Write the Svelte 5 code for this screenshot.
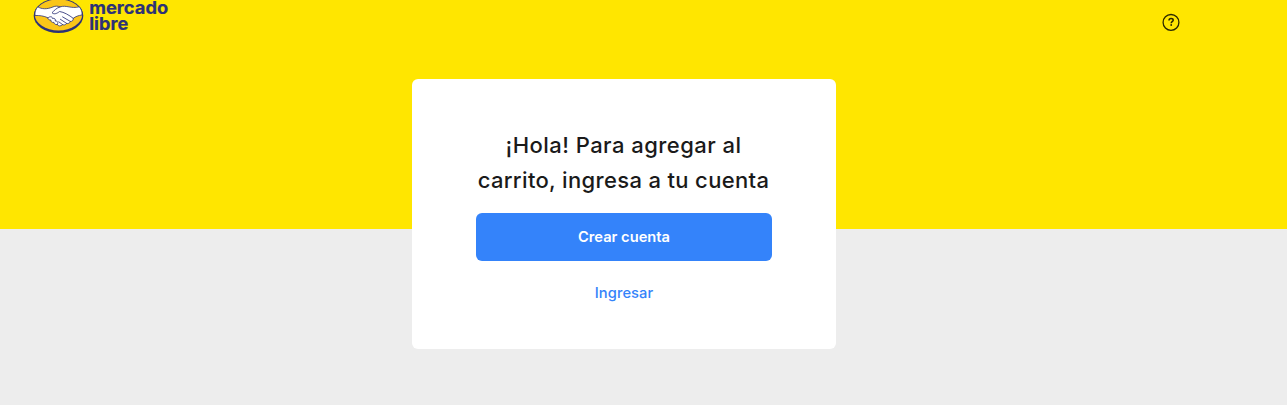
<script>
  const title = ['¡Hola! Para agregar al', 'carrito, ingresa a tu cuenta'];
</script>

<div class="page">
  <header class="nav">
    <svg class="logo" width="140" height="36" viewBox="30 0 140 36" role="img" aria-label="mercado libre">
      <ellipse cx="58.5" cy="15.7" rx="24.8" ry="17.3" fill="#2d3277" />
      <ellipse cx="58.5" cy="14.9" rx="23.6" ry="15.5" fill="#fac619" />
      <path d="M37.8 6.8C41.5 9.2 47 9.5 53 6.9C55.5 5.9 57.7 5.9 60 6.9C66.5 4.8 71 9 79.3 6.8C81.6 9.5 82.3 12.3 82 15C78.5 15.4 75.8 16.5 73.2 18.3C73.5 20.5 72 21.6 70.3 21.4C69.7 23.2 68.1 23.9 66.6 23.4C65.5 25 64 25.2 62.6 24.6C60.8 26.6 58.3 26.1 57.3 24.6C55.2 24.8 54 23.6 54 22.4C51.7 22.7 50.5 21.4 51 20.1C48.9 20.2 47.8 19 48 17.8C44 15.9 39.2 15.3 35 15.5C34.7 12.3 35.6 9.2 37.8 6.8Z" fill="#fff" stroke="#2d3277" stroke-width=".8" />
      <path d="M60 6.9C56 8 54.2 10.9 52 12.7C54.2 15 57.4 13.2 59.6 11.5C63.9 12.1 69 15 73.2 18.3M62.6 16.9L70.3 21.4M60.4 19.3L66.6 23.4M58.8 21.8L62.6 24.6M48 17.8C50.4 15.8 52.5 16.8 52.4 18.4C54.6 17.9 56 19.4 55.2 21C57.3 20.8 58.7 22.2 57.3 24.6" fill="none" stroke="#2d3277" stroke-width=".85" stroke-linecap="round" />
      <g class="wordmark">
        <text x="89.2" y="13.6" textLength="79" lengthAdjust="spacingAndGlyphs">mercado</text>
        <text x="89.2" y="29.9" textLength="39" lengthAdjust="spacingAndGlyphs">libre</text>
      </g>
    </svg>
    <svg class="help" width="18" height="18" viewBox="0 0 18 18" aria-label="Ayuda">
      <circle cx="9" cy="9.4" r="7.9" fill="none" stroke="#2b2900" stroke-width="1.3" />
      <path d="M7 7.6C7 6.3 7.8 5.6 9.1 5.6C10.4 5.6 11.2 6.3 11.2 7.2C11.2 8.4 9.2 8.5 9.2 10.3" fill="none" stroke="#2b2900" stroke-width="1.5" />
      <circle cx="9.2" cy="12" r=".9" fill="#2b2900" />
    </svg>
  </header>
  <main class="card">
    <h1>{#each title as line}<span class="line">{line}</span>{/each}</h1>
    <button class="primary">Crear cuenta</button>
    <button class="link">Ingresar</button>
  </main>
</div>

<style>
  :global(body) { margin: 0; }
  .page {
    box-sizing: border-box;
    height: 405px;
    overflow: hidden;
    background: linear-gradient(#ffe600 0 229px, #ededed 229px);
    font-family: "Proxima Nova", "Inter", sans-serif;
  }
  .nav {
    display: flex;
    justify-content: space-between;
    height: 79px;
    padding: 0 107px 0 30px;
  }
  .help { margin-top: 13px; }
  .wordmark {
    font: 700 17.5px "Inter", sans-serif;
    fill: #2d3277;
    stroke: #2d3277;
    stroke-width: .2px;
    stroke-linejoin: round;
  }
  .card {
    box-sizing: border-box;
    display: flex;
    flex-direction: column;
    width: 424px;
    height: 270px;
    margin-left: 412px;
    padding: 49px 64px 0;
    border-radius: 6px;
    background: #fff;
  }
  h1 {
    margin: 0 0 15px;
    color: #1a1a1a;
    font-size: 22px;
    font-weight: 500;
    line-height: 35px;
    text-align: center;
    white-space: nowrap;
  }
  .line { display: block; margin-left: -1px; letter-spacing: .34px; }
  .line:first-child { letter-spacing: .46px; }
  button {
    height: 48px;
    padding: 0;
    border: 0;
    border-radius: 6px;
    font: 600 14.7px/48px "Proxima Nova", "Inter", sans-serif;
  }
  .primary { background: #3483fa; color: #fff; }
  .link {
    margin-top: 8px;
    background: transparent;
    color: #3483fa;
    font-weight: 500;
    letter-spacing: .1px;
  }
</style>
